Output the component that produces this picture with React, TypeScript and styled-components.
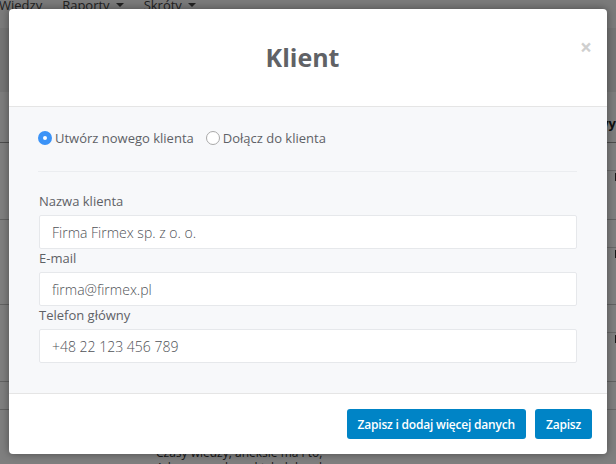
import React from 'react';
import styled, { createGlobalStyle } from 'styled-components';

const GlobalStyle = createGlobalStyle`
  html, body {
    margin: 0;
    height: 100%;
    overflow: hidden;
    background: #fff;
    font-family: "Open Sans", "Liberation Sans", sans-serif;
  }
  * { box-sizing: border-box; }
`;

const Page = styled.div`
  position: relative;
  width: 616px;
  height: 464px;
  overflow: hidden;
  background: #fff;
`;

const Nav = styled.nav`
  height: 28px;
  display: flex;
  align-items: flex-start;
  gap: 20px;
  margin-left: -1px;
  overflow: hidden;
  background: #f6f6f6;
  color: #444;
  font-size: 13px;
  line-height: 18px;
`;

const NavItem = styled.span`
  display: flex;
  align-items: center;
  gap: 6px;
  margin-top: -4px;
`;

const Caret = styled.i`
  width: 0;
  height: 0;
  border-left: 4px solid transparent;
  border-right: 4px solid transparent;
  border-top: 4px solid #444;
`;

const Band = styled.div`
  height: 64px;
  background: #eaeaea;
`;

const Head = styled.div`
  height: 51px;
  border-bottom: 1px solid #999;
  background: #fbfbfb;
  display: flex;
  justify-content: flex-end;
  align-items: flex-end;
  padding-bottom: 10px;
  color: #222;
  font-size: 13px;
  font-weight: 700;
`;

const Row = styled.div<{ $h: number }>`
  height: ${(p) => p.$h}px;
  border-bottom: 1px solid #c4c4c4;
  display: flex;
  justify-content: flex-end;
  padding-top: 27px;
`;

const RowCell = styled.div`
  width: 10px;
  height: 12px;
  border-top: 1px solid #d0d0d0;
  display: flex;
  justify-content: flex-end;
  padding-top: 2px;
`;

const RowMark = styled.i`
  width: 1px;
  height: 8px;
  background: #333;
`;

const BehindText = styled.div`
  padding: 35px 0 0 156px;
  font-size: 12px;
  line-height: 15px;
  color: #333;
`;

const Backdrop = styled.div`
  position: absolute;
  inset: 0;
  background: rgba(0, 0, 0, 0.5);
`;

const Modal = styled.div`
  position: absolute;
  left: 9px;
  top: 9px;
  width: 598px;
  height: 445px;
  display: flex;
  flex-direction: column;
  background: #fff;
  border-radius: 4px;
  overflow: hidden;
  box-shadow: 0 0 8px rgba(0, 0, 0, 0.4);
`;

const ModalHeader = styled.header`
  position: relative;
  height: 98px;
  flex: none;
  display: flex;
  align-items: center;
  justify-content: center;
  padding: 0 11px 2px 0;
  border-bottom: 1px solid #e5e5e5;
`;

const Title = styled.h2`
  margin: 0;
  color: #606266;
  font-size: 25px;
  font-weight: 700;
  line-height: 30px;
`;

const Close = styled.span`
  position: absolute;
  right: 15px;
  top: 26px;
  color: #cfcfcf;
  font-size: 21px;
  font-weight: 700;
  line-height: 24px;
`;

const ModalBody = styled.section`
  flex: 1;
  padding: 0 30px;
  background: #f7f8fa;
`;

const RadioRow = styled.div`
  height: 65px;
  display: flex;
  align-items: center;
  gap: 12px;
  padding-bottom: 2px;
  margin-left: -1px;
  border-bottom: 1px solid #ebedf0;
  margin-bottom: 20px;
`;

const RadioLabel = styled.label`
  display: flex;
  align-items: center;
  gap: 3px;
  color: #5e6166;
  font-size: 13px;
`;

const Radio = styled.input`
  appearance: none;
  width: 14px;
  height: 14px;
  margin: 0;
  border-radius: 50%;
  background: #fff;
  border: 1px solid #a9a9a9;

  &:checked {
    border: 5px solid #3b93f7;
  }
`;

const Field = styled.div`
  display: flex;
  flex-direction: column;
`;

const FieldLabel = styled.label`
  height: 23px;
  color: #5e6166;
  font-size: 13px;
  line-height: 19px;
`;

const Input = styled.input`
  height: 34px;
  width: 100%;
  padding: 0 12px;
  border: 1px solid #e6e8eb;
  border-radius: 2px;
  background: #fff;
  color: #4f5257;
  font-family: inherit;
  font-size: 14px;
  font-weight: 300;
  outline: none;
`;

const ModalFooter = styled.footer`
  height: 61px;
  flex: none;
  display: flex;
  justify-content: flex-end;
  align-items: center;
  gap: 9px;
  padding-right: 15px;
  border-top: 1px solid #e5e5e5;
`;

const Button = styled.button`
  height: 30px;
  padding: 0 11px;
  border: none;
  border-radius: 3px;
  background: #0084c6;
  color: #fff;
  font-family: inherit;
  font-size: 12px;
  font-weight: 600;
  letter-spacing: -0.2px;
`;

const fields = [
  { label: 'Nazwa klienta', value: 'Firma Firmex sp. z o. o.' },
  { label: 'E-mail', value: 'firma@firmex.pl' },
  { label: 'Telefon główny', value: '+48 22 123 456 789' },
];

export default function App() {
  return (
    <Page>
      <GlobalStyle />
      <Nav>
        <NavItem>Wiedzy</NavItem>
        <NavItem>Raporty <Caret /></NavItem>
        <NavItem>Skróty <Caret /></NavItem>
      </Nav>
      <Band />
      <Head>wy</Head>
      <Row $h={77}><RowCell><RowMark /></RowCell></Row>
      <Row $h={85}><RowCell><RowMark /></RowCell></Row>
      <Row $h={77}><RowCell><RowMark /></RowCell></Row>
      <Row $h={26}><RowCell /></Row>
      <BehindText>
        Czasy wiedzy, aneksie ma i to,
        <br />
        Ada z nowych praktyk dobrych
      </BehindText>
      <Backdrop />
      <Modal>
        <ModalHeader>
          <Title>Klient</Title>
          <Close>×</Close>
        </ModalHeader>
        <ModalBody>
          <RadioRow>
            <RadioLabel>
              <Radio type="radio" name="client" defaultChecked />
              Utwórz nowego klienta
            </RadioLabel>
            <RadioLabel>
              <Radio type="radio" name="client" />
              Dołącz do klienta
            </RadioLabel>
          </RadioRow>
          {fields.map((f) => (
            <Field key={f.label}>
              <FieldLabel>{f.label}</FieldLabel>
              <Input defaultValue={f.value} />
            </Field>
          ))}
        </ModalBody>
        <ModalFooter>
          <Button>Zapisz i dodaj więcej danych</Button>
          <Button>Zapisz</Button>
        </ModalFooter>
      </Modal>
    </Page>
  );
}
